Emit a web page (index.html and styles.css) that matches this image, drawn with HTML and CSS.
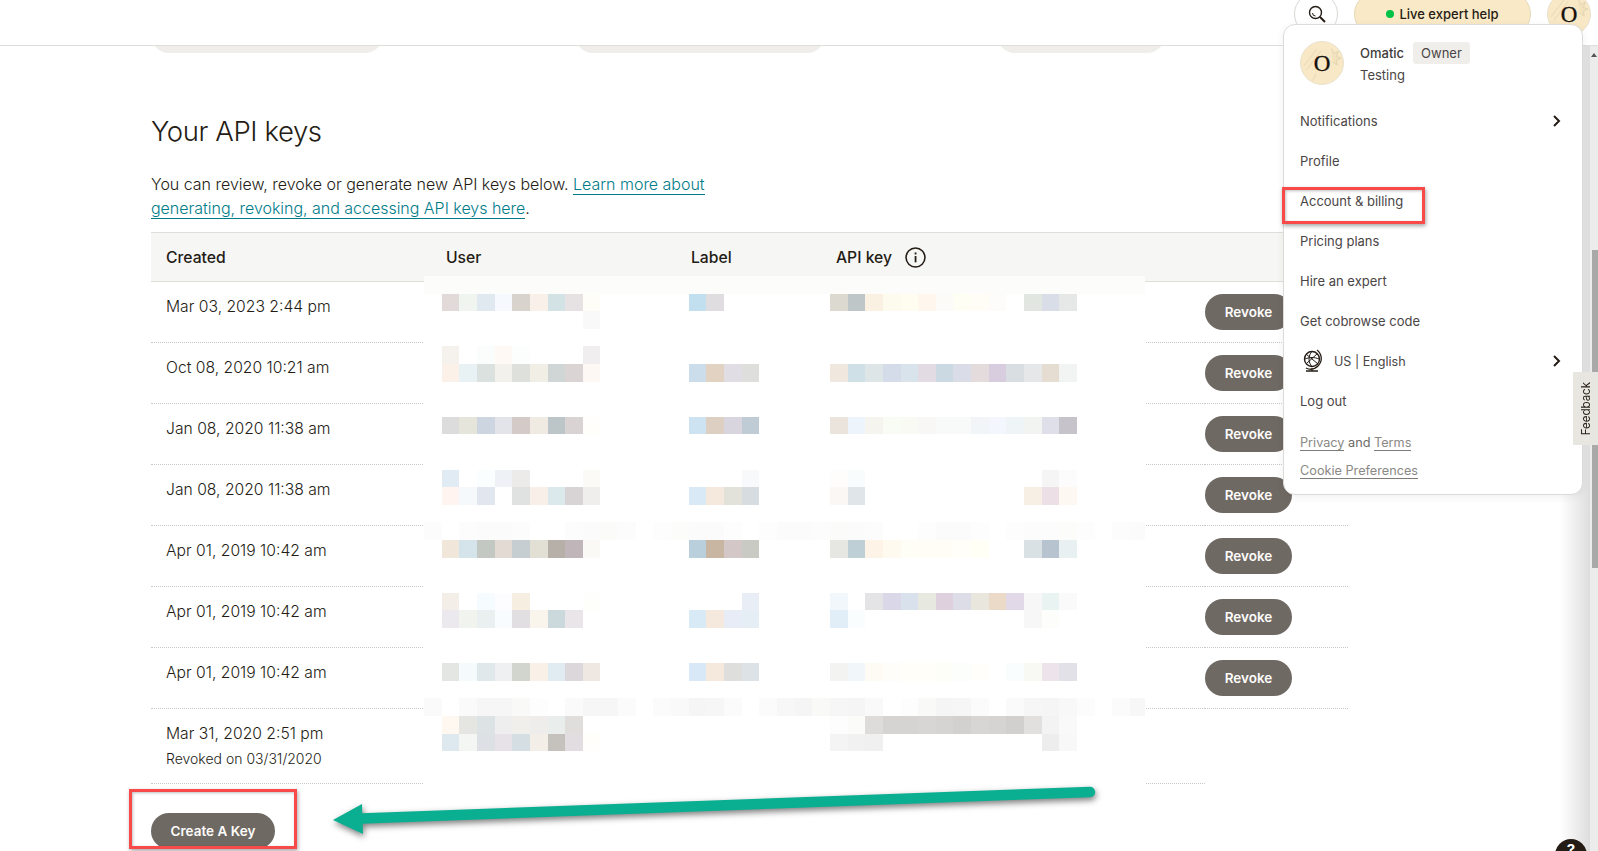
FILE: index.html
```html
<!DOCTYPE html>
<html lang="en">
<head>
<meta charset="utf-8">
<title>API keys</title>
<link rel="stylesheet" href="styles.css">
</head>
<body>
<header class="topbar">
  <button class="round-btn search-btn" aria-label="Search">
    <svg width="20" height="20" viewBox="0 0 20 20"><circle cx="8.5" cy="8.5" r="6" fill="none" stroke="#241c15" stroke-width="1.4"/><path d="M5.5 9a3 3 0 0 0 3 3" fill="none" stroke="#241c15" stroke-width="1"/><path d="M13 13l5 5" stroke="#241c15" stroke-width="2"/></svg>
  </button>
  <button class="help-pill"><span class="dot"></span>Live expert help</button>
  <div class="avatar top-avatar"><svg class="avatar-art" viewBox="0 0 44 44"><path d="M3 25L17 7M6 29L21 9M12 41l4-8" stroke="#e6d8b4" fill="none"/><path d="M32 7l2 5 5-2-2 5 5 2-5 2 1 5-5-3" fill="#f3e3bd" stroke="#e2d4b0"/></svg><span class="avatar-o">O</span></div>
</header>

<main class="content">
  <div class="pills">
    <span class="pill pill-a"></span>
    <span class="pill pill-b"></span>
    <span class="pill pill-c"></span>
  </div>
  <h1 class="title">Your API keys</h1>
  <p class="intro">You can review, revoke or generate new API keys below. <a href="#">Learn more about</a> <a href="#">generating, revoking, and accessing API keys here</a>.</p>
  <table class="keys">
    <thead>
      <tr>
        <th class="c-created">Created</th>
        <th class="c-user">User</th>
        <th class="c-label">Label</th>
        <th class="c-key"><span class="key-head">API key
          <svg width="21" height="21" viewBox="0 0 20 20"><circle cx="10" cy="10" r="9" fill="none" stroke="#241c15" stroke-width="1.5"/><rect x="9.2" y="8.6" width="1.7" height="6" fill="#241c15"/><rect x="9.2" y="5.2" width="1.7" height="1.9" fill="#241c15"/></svg></span>
        </th>
        <th class="c-action"></th>
      </tr>
    </thead>
    <tbody>
      <tr><td>Mar 03, 2023 2:44 pm</td><td></td><td></td><td></td><td class="c-action"><button class="btn">Revoke</button></td></tr>
      <tr><td>Oct 08, 2020 10:21 am</td><td></td><td></td><td></td><td class="c-action"><button class="btn">Revoke</button></td></tr>
      <tr><td>Jan 08, 2020 11:38 am</td><td></td><td></td><td></td><td class="c-action"><button class="btn">Revoke</button></td></tr>
      <tr><td>Jan 08, 2020 11:38 am</td><td></td><td></td><td></td><td class="c-action"><button class="btn">Revoke</button></td></tr>
      <tr><td>Apr 01, 2019 10:42 am</td><td></td><td></td><td></td><td class="c-action"><button class="btn">Revoke</button></td></tr>
      <tr><td>Apr 01, 2019 10:42 am</td><td></td><td></td><td></td><td class="c-action"><button class="btn">Revoke</button></td></tr>
      <tr><td>Apr 01, 2019 10:42 am</td><td></td><td></td><td></td><td class="c-action"><button class="btn">Revoke</button></td></tr>
      <tr class="revoked"><td>Mar 31, 2020 2:51 pm<small>Revoked on 03/31/2020</small></td><td></td><td></td><td></td></tr>
    </tbody>
  </table>
  <button class="btn create">Create A Key</button>
</main>

<svg class="mosaic" viewBox="0 0 40.85 29" preserveAspectRatio="none" shape-rendering="crispEdges" aria-hidden="true">
  <g><rect x="0" class="wide" fill="#fcfcfa"/></g>
  <g transform="translate(0 1)"><rect x="1" fill="#e2d9d9"/><rect x="2" fill="#f1f5f0"/><rect x="3" fill="#e0e9f0"/><rect x="4" fill="#f6fafe"/><rect x="5" fill="#d9d3cd"/><rect x="6" fill="#f9f0e9"/><rect x="7" fill="#d3e3e5"/><rect x="8" fill="#e6e2e4"/><rect x="9" fill="#fefdf8"/><rect x="15" fill="#c2dff0"/><rect x="16" fill="#dfdde0"/><rect x="23" fill="#dcd9d1"/><rect x="24" fill="#bfc6c8"/><rect x="25" fill="#fbf1e2"/><rect x="26" fill="#fdfaee"/><rect x="27" fill="#fffdf0"/><rect x="28" fill="#fff6ee"/><rect x="29" fill="#fdfbf7"/><rect x="30" fill="#fffef4"/><rect x="31" fill="#fffdf6"/><rect x="32" fill="#fdfcfa"/><rect x="34" fill="#e1e6e1"/><rect x="35" fill="#d9dde8"/><rect x="36" fill="#e6e8e7"/></g>
  <g transform="translate(0 2)"><rect x="9" fill="#f9f9f9"/></g>
  <g transform="translate(0 4)"><rect x="1" fill="#f5f1ec"/><rect x="3" fill="#fbfdfc"/><rect x="4" fill="#fff9f6"/><rect x="5" fill="#fbfefd"/><rect x="9" fill="#f0eeee"/></g>
  <g transform="translate(0 5)"><rect x="1" fill="#fcf1e9"/><rect x="2" fill="#e8f2f5"/><rect x="3" fill="#dae1df"/><rect x="4" fill="#f2f1ec"/><rect x="5" fill="#dee0dc"/><rect x="6" fill="#f1eee6"/><rect x="7" fill="#d0d6d5"/><rect x="8" fill="#dbd4d4"/><rect x="9" fill="#fdf8f3"/><rect x="15" fill="#cbdcea"/><rect x="16" fill="#e2d2c2"/><rect x="17" fill="#e0dde5"/><rect x="18" fill="#dedfdd"/><rect x="23" fill="#f0e7de"/><rect x="24" fill="#cfe0e7"/><rect x="25" fill="#dde5e7"/><rect x="26" fill="#d5dce9"/><rect x="27" fill="#d8e3ec"/><rect x="28" fill="#e3dbe3"/><rect x="29" fill="#cbd9e3"/><rect x="30" fill="#dadde8"/><rect x="31" fill="#e3dbdc"/><rect x="32" fill="#d8cdde"/><rect x="33" fill="#d8dee2"/><rect x="34" fill="#e6e7e9"/><rect x="35" fill="#e5dcd2"/><rect x="36" fill="#f2f4f3"/></g>
  <g transform="translate(0 8)"><rect x="1" fill="#dcdcdc"/><rect x="2" fill="#e5e5dc"/><rect x="3" fill="#cdd6e0"/><rect x="4" fill="#e3e4ea"/><rect x="5" fill="#d4cbc9"/><rect x="6" fill="#efebe3"/><rect x="7" fill="#bcc6c8"/><rect x="8" fill="#d9d3d3"/><rect x="9" fill="#fffefa"/><rect x="15" fill="#cde3f2"/><rect x="16" fill="#ddd0c3"/><rect x="17" fill="#d9d5df"/><rect x="18" fill="#c0ccd5"/><rect x="23" fill="#ebe4dd"/><rect x="24" fill="#edf4fb"/><rect x="25" fill="#f6f4ef"/><rect x="26" fill="#f9fbf5"/><rect x="27" fill="#f9faf4"/><rect x="28" fill="#f8f7f6"/><rect x="29" fill="#f7faf8"/><rect x="30" fill="#f7faf8"/><rect x="31" fill="#f2f5f7"/><rect x="32" fill="#f3f7fd"/><rect x="33" fill="#eff4f7"/><rect x="34" fill="#f2f4f2"/><rect x="35" fill="#dedfe8"/><rect x="36" fill="#c6c4ca"/></g>
  <g transform="translate(0 11)"><rect x="1" fill="#e0ebf4"/><rect x="3" fill="#fafeff"/><rect x="4" fill="#eef2f6"/><rect x="5" fill="#ecebe9"/><rect x="9" fill="#fbfaf6"/><rect x="18" fill="#f8f9fb"/><rect x="23" fill="#fffdfc"/><rect x="24" fill="#f8fcfc"/><rect x="35" fill="#f5f5f5"/><rect x="36" fill="#fcfcfd"/></g>
  <g transform="translate(0 12)"><rect x="1" fill="#fff4ef"/><rect x="2" fill="#f5f9fb"/><rect x="3" fill="#e2e6ef"/><rect x="5" fill="#dfe2e0"/><rect x="6" fill="#f8efe9"/><rect x="7" fill="#dbe9ed"/><rect x="8" fill="#d8d3d5"/><rect x="9" fill="#f0eded"/><rect x="15" fill="#d9eaf6"/><rect x="16" fill="#f5e9de"/><rect x="17" fill="#e2e2da"/><rect x="18" fill="#d6dcdf"/><rect x="23" fill="#faf7f5"/><rect x="24" fill="#dfe5e8"/><rect x="34" fill="#f7efe4"/><rect x="35" fill="#ecdfe6"/><rect x="36" fill="#fdf8f2"/></g>
  <g transform="translate(0 14)"><rect x="0" fill="#fcfcfc"/><rect x="2" fill="#fcfcfc"/><rect x="3" fill="#fbfbfb"/><rect x="4" fill="#fbfbfb"/><rect x="5" fill="#fcfcfc"/><rect x="8" fill="#fcfcfc"/><rect x="9" fill="#fbfbfb"/><rect x="10" fill="#fbfbf9"/><rect x="11" fill="#fcfcfc"/><rect x="13" fill="#fdfdfd"/><rect x="14" fill="#fcfcfa"/><rect x="15" fill="#fbfbfb"/><rect x="16" fill="#fbfbfb"/><rect x="17" fill="#fdfdfd"/><rect x="19" fill="#fdfdfd"/><rect x="20" fill="#fbfbfb"/><rect x="21" fill="#fbfbfb"/><rect x="22" fill="#fcfcfc"/><rect x="23" fill="#fbfbf9"/><rect x="24" fill="#fbfbfb"/><rect x="25" fill="#fcfcfc"/><rect x="28" fill="#fdfdfd"/><rect x="29" fill="#fbfbfb"/><rect x="30" fill="#fbfbfb"/><rect x="31" fill="#fdfdfd"/><rect x="33" fill="#fdfdfd"/><rect x="34" fill="#fcfcfc"/><rect x="35" fill="#fcfcfc"/><rect x="36" fill="#fcfcfa"/><rect x="37" fill="#fdfdfd"/><rect x="39" fill="#fcfcfc"/><rect x="40" fill="#fbfbfb"/></g>
  <g transform="translate(0 15)"><rect x="1" fill="#f0e6d9"/><rect x="2" fill="#d5e3ea"/><rect x="3" fill="#c3c8c3"/><rect x="4" fill="#e3dad4"/><rect x="5" fill="#c7ced2"/><rect x="6" fill="#e2e0d4"/><rect x="7" fill="#b6b0a9"/><rect x="8" fill="#c0b5b9"/><rect x="9" fill="#fbf9f6"/><rect x="15" fill="#b9cfdc"/><rect x="16" fill="#c9b6a2"/><rect x="17" fill="#d3c8c7"/><rect x="18" fill="#c9cac4"/><rect x="23" fill="#e6e6e3"/><rect x="24" fill="#bed0d5"/><rect x="25" fill="#fdf3e7"/><rect x="26" fill="#fefaf0"/><rect x="27" fill="#fffef6"/><rect x="28" fill="#fffdf6"/><rect x="29" fill="#fffdf6"/><rect x="30" fill="#fffef8"/><rect x="31" fill="#fffff6"/><rect x="34" fill="#d9e1e4"/><rect x="35" fill="#b7c4cf"/><rect x="36" fill="#e8f0f2"/></g>
  <g transform="translate(0 18)"><rect x="1" fill="#f3eee8"/><rect x="3" fill="#f6fbff"/><rect x="4" fill="#fdfdff"/><rect x="5" fill="#f6eee1"/><rect x="9" fill="#fefefb"/><rect x="18" fill="#e9eef6"/><rect x="23" fill="#f1f7fa"/><rect x="25" fill="#e4e4e6"/><rect x="26" fill="#dad8e8"/><rect x="27" fill="#d9e1ec"/><rect x="28" fill="#e7e8df"/><rect x="29" fill="#ded1dd"/><rect x="30" fill="#dddde8"/><rect x="31" fill="#e9e6de"/><rect x="32" fill="#ebdac8"/><rect x="33" fill="#e1d9e7"/><rect x="34" fill="#f7f7f7"/><rect x="35" fill="#e9f3f2"/><rect x="36" fill="#fafafa"/></g>
  <g transform="translate(0 19)"><rect x="1" fill="#ece9ee"/><rect x="2" fill="#f1f3ee"/><rect x="3" fill="#e9f0ef"/><rect x="4" fill="#f8fcff"/><rect x="5" fill="#e2dfe3"/><rect x="6" fill="#f9f4ec"/><rect x="7" fill="#cbd8dc"/><rect x="8" fill="#eae5e8"/><rect x="15" fill="#d9eaf7"/><rect x="16" fill="#f5e9de"/><rect x="17" fill="#e8ecf7"/><rect x="18" fill="#e5eef4"/><rect x="23" fill="#e2eef7"/><rect x="24" fill="#f9fdfe"/><rect x="34" fill="#f7f7f7"/><rect x="35" fill="#fdfdfb"/></g>
  <g transform="translate(0 22)"><rect x="1" fill="#e4e6e3"/><rect x="2" fill="#f5fafc"/><rect x="3" fill="#e1e8eb"/><rect x="4" fill="#eff0f2"/><rect x="5" fill="#d2d5cd"/><rect x="6" fill="#f9f1e8"/><rect x="7" fill="#e0ecf2"/><rect x="8" fill="#dcd7da"/><rect x="9" fill="#efe8e2"/><rect x="15" fill="#d9e8f6"/><rect x="16" fill="#f5e9de"/><rect x="17" fill="#dededc"/><rect x="18" fill="#dde2e6"/><rect x="23" fill="#f3f4f2"/><rect x="24" fill="#f1f6fa"/><rect x="25" fill="#fefaf4"/><rect x="26" fill="#fefdf9"/><rect x="27" fill="#fffef9"/><rect x="28" fill="#fffef9"/><rect x="29" fill="#fefef9"/><rect x="30" fill="#fcfefc"/><rect x="31" fill="#fffefa"/><rect x="33" fill="#fafdfe"/><rect x="34" fill="#f8f9f3"/><rect x="35" fill="#ece3eb"/><rect x="36" fill="#e2e1e7"/></g>
  <g transform="translate(0 24)"><rect x="0" fill="#fafafa"/><rect x="2" fill="#fafafa"/><rect x="3" fill="#f6f6f6"/><rect x="4" fill="#f6f6f6"/><rect x="5" fill="#f9f9f7"/><rect x="6" fill="#fdfdfd"/><rect x="8" fill="#fafafa"/><rect x="9" fill="#f6f6f6"/><rect x="10" fill="#f6f6f6"/><rect x="11" fill="#fbfbfb"/><rect x="13" fill="#fbfbfb"/><rect x="14" fill="#f9f9f9"/><rect x="15" fill="#f5f5f5"/><rect x="16" fill="#f6f6f6"/><rect x="17" fill="#fbfbfb"/><rect x="19" fill="#fbfbfb"/><rect x="20" fill="#f7f7f7"/><rect x="21" fill="#f5f5f5"/><rect x="22" fill="#f9f9f7"/><rect x="23" fill="#f6f6f6"/><rect x="24" fill="#f5f5f5"/><rect x="25" fill="#f9f9f9"/><rect x="27" fill="#fdfdfd"/><rect x="28" fill="#f9f9f7"/><rect x="29" fill="#f5f5f5"/><rect x="30" fill="#f6f6f6"/><rect x="31" fill="#fbfbfb"/><rect x="33" fill="#fafafa"/><rect x="34" fill="#f6f6f6"/><rect x="35" fill="#f5f5f5"/><rect x="36" fill="#f8f8f8"/><rect x="37" fill="#fcfcfc"/><rect x="39" fill="#fbfbfb"/><rect x="40" fill="#f7f7f7"/></g>
  <g transform="translate(0 25)"><rect x="1" fill="#fef8f1"/><rect x="2" fill="#e5e5e1"/><rect x="3" fill="#dde2e5"/><rect x="4" fill="#efeeee"/><rect x="5" fill="#f1efec"/><rect x="6" fill="#eeedeb"/><rect x="7" fill="#e9edec"/><rect x="8" fill="#dfdedc"/><rect x="23" fill="#fdfdfd"/><rect x="24" fill="#fbfbf9"/><rect x="25" fill="#dddcda"/><rect x="26" fill="#d5d4d2"/><rect x="27" fill="#d5d4d2"/><rect x="28" fill="#d7d6d4"/><rect x="29" fill="#d5d4d2"/><rect x="30" fill="#d2d1cf"/><rect x="31" fill="#d7d6d4"/><rect x="32" fill="#d5d4d2"/><rect x="33" fill="#d1d0ce"/><rect x="34" fill="#e1e0de"/><rect x="35" fill="#f3f3f3"/><rect x="36" fill="#f9f9f9"/></g>
  <g transform="translate(0 26)"><rect x="1" fill="#dee8ef"/><rect x="2" fill="#f3f6f3"/><rect x="3" fill="#dde1e6"/><rect x="4" fill="#e7e1e8"/><rect x="5" fill="#d5dee2"/><rect x="6" fill="#f3eee7"/><rect x="7" fill="#c5c1bd"/><rect x="8" fill="#e2dde0"/><rect x="9" fill="#fffefb"/><rect x="23" fill="#f4f4f4"/><rect x="24" fill="#f1f1f1"/><rect x="25" fill="#f0f0f0"/><rect x="35" fill="#ededed"/><rect x="36" fill="#f8f8f8"/></g>
</svg>

<aside class="scroller" aria-hidden="true">
  <span class="scroll-up"></span>
  <span class="scroll-thumb"></span>
</aside>
<div class="feedback"><span>Feedback</span></div>
<div class="help-fab">?</div>

<nav class="menu">
  <div class="menu-head">
    <div class="avatar menu-avatar"><svg class="avatar-art" viewBox="0 0 44 44"><path d="M3 25L17 7M6 29L21 9M12 41l4-8" stroke="#e6d8b4" fill="none"/><path d="M32 7l2 5 5-2-2 5 5 2-5 2 1 5-5-3" fill="#f3e3bd" stroke="#e2d4b0"/></svg><span class="avatar-o">O</span></div>
    <div class="who">
      <div class="who-top"><span class="who-name">Omatic</span><span class="badge">Owner</span></div>
      <div class="who-org">Testing</div>
    </div>
  </div>
  <ul class="menu-list">
    <li>Notifications<svg class="chev" width="10" height="14" viewBox="0 0 10 14"><path d="M2 2l5 5-5 5" fill="none" stroke="#241c15" stroke-width="2"/></svg></li>
    <li>Profile</li>
    <li>Account &amp; billing</li>
    <li>Pricing plans</li>
    <li>Hire an expert</li>
    <li>Get cobrowse code</li>
    <li><svg class="globe" width="22" height="24" viewBox="0 0 22 24"><circle cx="10" cy="10" r="7.5" fill="none" stroke="#241c15" stroke-width="1.4"/><path d="M4 5l12 10M4.500 14.500L15 5M10 2.500c-4 4-4 11 0 15M3 10c5-2 9-2 14 0" fill="none" stroke="#241c15" stroke-width="1"/><path d="M15 1c5 4 6 11 1 16s-10 3-12 2M4 22h12M10 19v3" fill="none" stroke="#241c15" stroke-width="1.3"/></svg><span class="lang">US | English</span><svg class="chev" width="10" height="14" viewBox="0 0 10 14"><path d="M2 2l5 5-5 5" fill="none" stroke="#241c15" stroke-width="2"/></svg></li>
    <li>Log out</li>
  </ul>
  <div class="legal legal-first"><a href="#">Privacy</a> and <a href="#">Terms</a></div>
  <div class="legal"><a href="#">Cookie Preferences</a></div>
</nav>

<span class="callout callout-billing"></span>
<span class="callout callout-create"></span>
<svg class="arrow" viewBox="0 0 1598 851" aria-hidden="true">
  <g fill="#0aaf92">
    <path d="M362 818.500L1090 792" stroke="#0aaf92" stroke-width="10.500" stroke-linecap="round"/>
    <path d="M333 820L362 804L363 834Z"/>
  </g>
</svg>
```

FILE: styles.css
```css
* { box-sizing: border-box; }
html, body { margin: 0; padding: 0; }
body {
  position: relative;
  width: 1598px;
  height: 851px;
  overflow: hidden;
  background: #fff;
  color: #241c15;
  font-family: "Inter", "Liberation Sans", sans-serif;
  font-size: 15px;
}
button { font-family: inherit; border: 0; cursor: pointer; }

/* top bar */
.topbar {
  position: relative;
  z-index: 2;
  height: 46px;
  background: #fff;
  border-bottom: 1px solid #dfdedb;
  display: flex;
  align-items: flex-start;
  justify-content: flex-end;
  gap: 16px;
  padding-right: 7px;
  overflow: hidden;
}
.round-btn, .help-pill, .top-avatar { margin-top: -8px; height: 44px; flex: none; }
.round-btn {
  width: 44px;
  border-radius: 50%;
  background: #fff;
  border: 1px solid #d9d8d4;
  display: flex;
  align-items: center;
  justify-content: center;
  padding: 0 0 0 1px;
}
.help-pill {
  width: 177px;
  border-radius: 22px;
  background: #f9e9c6;
  border: 1px solid #e4d9b9;
  color: #241c15;
  font-size: 13px;
  font-weight: 500;
  display: flex;
  align-items: center;
  justify-content: center;
  gap: 5px;
  padding: 0;
}
.dot { width: 8px; height: 8px; border-radius: 50%; background: #00c244; }

.avatar {
  position: relative;
  width: 44px;
  height: 44px;
  border-radius: 50%;
  background: #f8e8c5;
  border: 1px solid #e9e2cf;
  overflow: hidden;
  display: flex;
  align-items: center;
  justify-content: center;
  flex: none;
}
.avatar-art { position: absolute; inset: 0; width: 100%; height: 100%; }
.avatar-o {
  position: relative;
  font-family: "Liberation Serif", serif;
  font-size: 23px;
  line-height: 1;
  color: #14100c;
  -webkit-text-stroke: .35px #14100c;
}

/* page */
.content { padding-left: 151px; }
.pills { display: flex; margin-top: -29px; height: 36px; }
.pill { height: 36px; border-radius: 18px; background: #efeeea; }
.pill-a { width: 232px; }
.pill-b { width: 250px; margin-left: 192px; }
.pill-c { width: 168px; margin-left: 172px; }

.title {
  margin: 60px 0 0;
  font-size: 27.500px;
  line-height: 36px;
  font-weight: 300;
  letter-spacing: -0.4px;
}
.intro {
  width: 570px;
  margin: 23px 0 12px;
  font-size: 16px;
  line-height: 24px;
  font-weight: 300;
  letter-spacing: -0.02px;
}
.intro a {
  color: #007c89;
  text-decoration: none;
  border-bottom: 1px solid #007c89;
}

.keys {
  width: 1197px;
  table-layout: fixed;
  border-collapse: separate;
  border-spacing: 0;
}
.keys th {
  height: 50px;
  padding: 0 0 0 15px;
  text-align: left;
  font-size: 15.700px;
  font-weight: 500;
  background: #f6f6f4;
  border-top: 1px solid #dfdedb;
  border-bottom: 1px solid #dfdedb;
}
.c-created { width: 280px; }
.c-user { width: 245px; }
.c-label { width: 145px; }
.c-key { width: 384px; }
.key-head { display: inline-flex; align-items: center; gap: 13px; }
.keys td {
  height: 61px;
  padding: 13px 0 11px 15px;
  vertical-align: top;
  font-size: 15.700px;
  line-height: 24px;
  font-weight: 300;
  border-bottom: 1px dotted #c9c8c5;
}
.keys td.c-action { padding: 12px 0 12px; }
.keys small { display: block; font-size: 14px; line-height: 26px; }
.btn {
  display: block;
  height: 36px;
  padding: 0;
  border-radius: 18px;
  background: #6f6964;
  color: #fdfcfa;
  font-size: 13.500px;
  font-weight: 600;
  width: 87px;
}
.create { width: 124px; margin-top: 29px; }

/* pixelated privacy overlay */
.mosaic {
  position: absolute;
  left: 424.300px;
  top: 276px;
  width: 721px;
  height: 510.400px;
  background: #fff;
}
.mosaic rect { width: 1px; height: 1px; }
.mosaic rect.wide { width: 41px; }

/* page scrollbar */
.scroller {
  position: absolute;
  top: 46px;
  right: 0;
  bottom: 0;
  width: 8px;
  background: #ececec;
}
.scroller::before {
  content: "";
  position: absolute;
  top: 0;
  bottom: 0;
  right: 8px;
  width: 30px;
  background: linear-gradient(to right, rgba(235,235,235,0), rgba(218,218,218,.9));
}
.scroll-up {
  position: absolute;
  top: 7px;
  left: 1px;
  border: 3px solid transparent;
  border-top: 0;
  border-bottom: 4px solid #555;
}
.scroll-thumb {
  position: absolute;
  top: 204px;
  left: 2px;
  width: 6px;
  height: 318px;
  background: #a9a9a9;
}

.feedback {
  position: absolute;
  z-index: 5;
  top: 372px;
  right: 0;
  width: 25px;
  height: 73px;
  background: #e8e6e1;
  display: flex;
  align-items: center;
  justify-content: center;
}
.feedback span {
  writing-mode: vertical-rl;
  transform: rotate(180deg);
  font-size: 11.500px;
}
.help-fab {
  position: absolute;
  top: 839px;
  left: 1555px;
  width: 32px;
  height: 32px;
  border-radius: 50%;
  background: #241c15;
  color: #fff;
  font-size: 15px;
  font-weight: 700;
  text-align: center;
  line-height: 22px;
}

/* account menu */
.menu {
  position: absolute;
  z-index: 3;
  top: 24px;
  left: 1283px;
  width: 300px;
  height: 471px;
  padding: 16px 16px 0;
  background: #fff;
  border: 1px solid #dcdbd7;
  border-radius: 12px;
  box-shadow: 0 2px 8px rgba(0,0,0,.06);
  font-size: 13px;
  color: #4a4545;
}
.menu-head { display: flex; gap: 16px; height: 44px; }
.who-top { display: flex; align-items: center; gap: 9px; height: 24px; }
.who-name { font-weight: 500; color: #403b3b; }
.badge {
  padding: 0 8px;
  height: 22px;
  line-height: 22px;
  border-radius: 3px;
  background: #efeeea;
  color: #4a4545;
}
.who-org { line-height: 20px; }
.menu-list {
  list-style: none;
  margin: 16px 0 0;
  padding: 0;
}
.menu-list li {
  display: flex;
  align-items: center;
  height: 40px;
}
.chev { margin-left: auto; margin-right: 4px; }
.globe { margin: 0 10px 0 2px; }
.lang { font-size: 12.600px; }
.legal { line-height: 28px; font-size: 12.700px; color: #6b6a66; }
.legal-first { margin-top: 8px; }
.legal a { color: #8a8985; text-decoration: none; border-bottom: 1px solid #7d7c78; }

/* annotations */
.callout {
  position: absolute;
  z-index: 4;
  border: 3px solid #f94a4a;
  box-shadow: 1px 2px 4px rgba(0,0,0,.35), inset 1px 1px 3px rgba(0,0,0,.25);
}
.callout-billing { left: 1282px; top: 187px; width: 143px; height: 37px; }
.callout-create { left: 129px; top: 789px; width: 168px; height: 60px; }
.arrow {
  position: absolute;
  z-index: 4;
  inset: 0;
  width: 1598px;
  height: 851px;
  pointer-events: none;
  filter: drop-shadow(1px 3px 3px rgba(0,0,0,.5));
}
```
